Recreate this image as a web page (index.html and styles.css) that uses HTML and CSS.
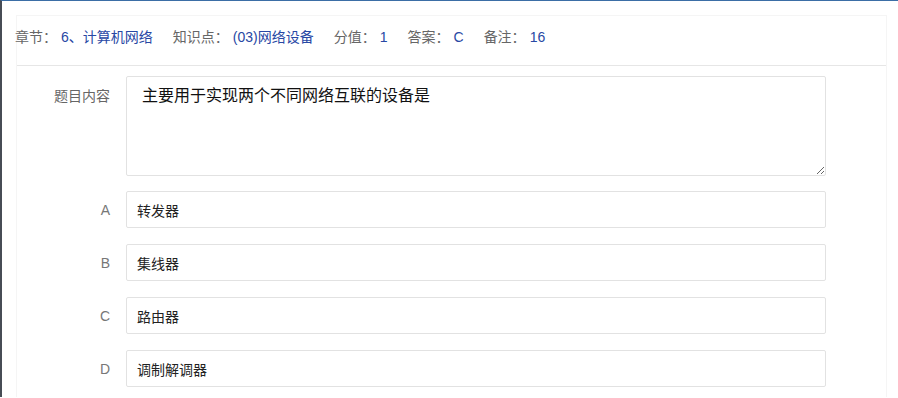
FILE: index.html
```html
<!DOCTYPE html>
<html lang="zh-CN">
<head>
<meta charset="utf-8">
<title>题目详情</title>
<link rel="stylesheet" href="styles.css">
</head>
<body>
<div class="page">
  <div class="panel">
    <div class="meta">
      <span class="item"><span class="key">章节：</span><span class="val">6、计算机网络</span></span>
      <span class="item"><span class="key">知识点：</span><span class="val">(03)网络设备</span></span>
      <span class="item"><span class="key">分值：</span><span class="val">1</span></span>
      <span class="item"><span class="key">答案：</span><span class="val">C</span></span>
      <span class="item"><span class="key">备注：</span><span class="val">16</span></span>
    </div>
    <div class="form">
      <div class="row row-content">
        <label class="label">题目内容</label>
        <textarea class="content">主要用于实现两个不同网络互联的设备是</textarea>
      </div>
      <div class="row">
        <label class="label">A</label>
        <div class="box">转发器</div>
      </div>
      <div class="row">
        <label class="label">B</label>
        <div class="box">集线器</div>
      </div>
      <div class="row">
        <label class="label">C</label>
        <div class="box">路由器</div>
      </div>
      <div class="row">
        <label class="label">D</label>
        <div class="box">调制解调器</div>
      </div>
    </div>
  </div>
</div>
</body>
</html>
```
FILE: styles.css
```css
html, body {
  margin: 0;
  padding: 0;
  background: #fff;
}
body {
  border-top: 1px solid #3b6ea6;
  border-left: 2px solid #474c55;
  font-family: "Liberation Sans", "Noto Sans CJK SC", sans-serif;
  font-size: 14px;
  color: #333;
  height: 397px;
  overflow: hidden;
  box-sizing: border-box;
}
.page {
  padding: 14px 11px 0 14px;
}
.panel {
  border: 1px solid #f5f5f5;
  border-bottom: none;
  min-height: 400px;
}
.meta {
  display: flex;
  gap: 20px;
  padding: 11px 0 18px 0;
  line-height: 20px;
  border-bottom: 1px solid #e6e6e6;
}
.item:first-child {
  margin-left: -2px;
}
.key {
  color: #666;
  margin-right: 4px;
}
.val {
  color: #2848a4;
}
.form {
  padding-top: 10px;
}
.row {
  display: flex;
  align-items: center;
  margin-bottom: 16px;
}
.row-content {
  align-items: flex-start;
  margin-bottom: 15px;
}
.label {
  width: 93px;
  margin-right: 16px;
  text-align: right;
  color: #777;
  font-size: 14px;
  line-height: 20px;
}
.row-content .label {
  padding-top: 10px;
  color: #666;
}
.content {
  display: block;
  width: 700px;
  height: 100px;
  box-sizing: border-box;
  margin: 0;
  padding: 10px 15px;
  border: 1px solid #e2e2e2;
  border-radius: 2px;
  font-family: "Liberation Sans", "Noto Sans CJK SC", sans-serif;
  font-size: 16px;
  line-height: 18px;
  color: #111;
  background: #fff;
  outline: none;
}
.box {
  width: 700px;
  height: 37px;
  box-sizing: border-box;
  padding: 0 10px;
  border: 1px solid #e2e2e2;
  border-radius: 2px;
  display: flex;
  align-items: center;
  font-size: 14px;
  color: #222;
}
```
